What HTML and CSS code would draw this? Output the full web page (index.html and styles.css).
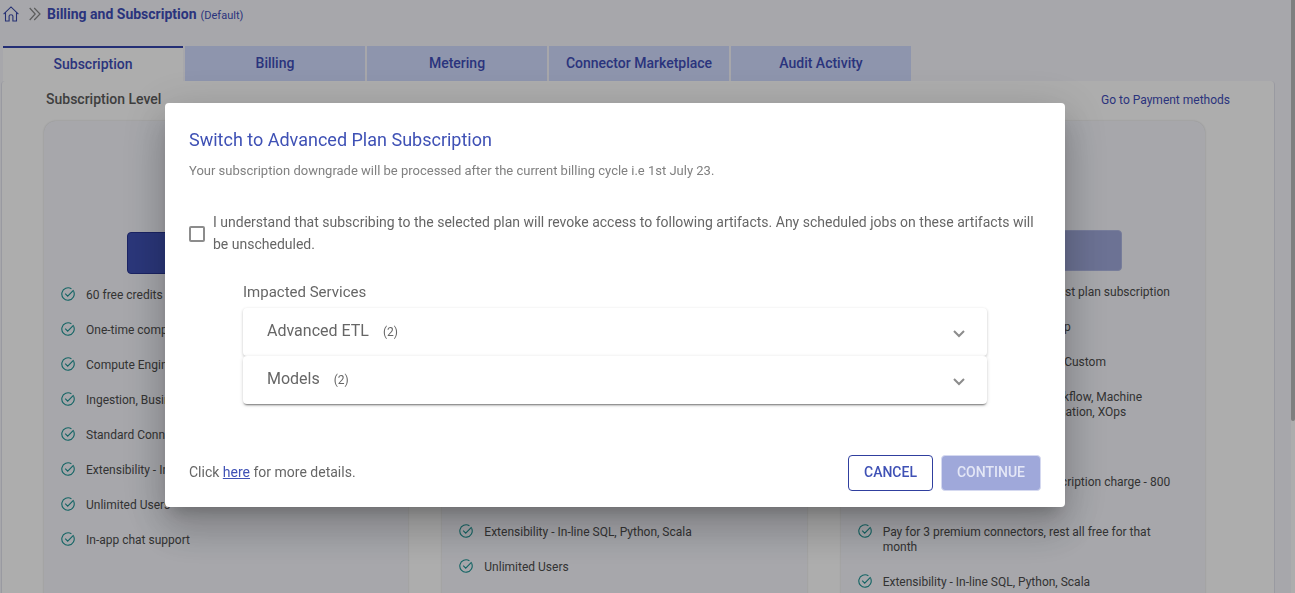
FILE: index.html
```html
<!DOCTYPE html>
<html lang="en">
<head>
<meta charset="utf-8">
<title>Billing and Subscription</title>
<link rel="stylesheet" href="styles.css">
</head>
<body>
<svg class="sprite" aria-hidden="true">
  <symbol id="check" viewBox="0 0 14 14">
    <path d="M12.6 4.3A6.2 6.2 0 1 1 10.4 1.8M4.2 6.6l2.5 2.5 5.9-6"/>
  </symbol>
  <symbol id="chevron" viewBox="0 0 12 12">
    <path d="M1 3l5 5 5-5"/>
  </symbol>
</svg>

<div class="page">
  <header class="crumbs">
    <a class="home" href="#" aria-label="Home">
      <svg width="16" height="16" viewBox="0 0 16 16"><path d="M.6 8.200L8 .9l7.400 7.300M2.500 6.800v8.200h3.600v-5q0-1.200 1.900-1.200t1.900 1.200v5h3.600V6.800"/></svg>
    </a>
    <svg class="arrows" width="12" height="14" viewBox="0 0 12 14"><path d="M.7 1l5.500 6-5.500 6M5.200 1l5.800 6-5.800 6"/></svg>
    <h1 class="crumb-title">Billing and Subscription</h1>
    <span class="crumb-note">(Default)</span>
  </header>

  <nav class="tabs">
    <button class="tab tab-active" type="button">Subscription</button>
    <button class="tab" type="button">Billing</button>
    <button class="tab" type="button">Metering</button>
    <button class="tab" type="button">Connector Marketplace</button>
    <button class="tab" type="button">Audit Activity</button>
  </nav>

  <main class="panel">
    <div class="panel-head">
      <h2 class="panel-title">Subscription Level</h2>
      <a class="payment" href="#">Go to Payment methods</a>
    </div>
    <div class="plans">
      <section class="plan plan-current">
        <button class="plan-button" type="button" aria-label="Select plan"></button>
        <ul class="features">
          <li><svg class="tick"><use href="#check"/></svg><span>60 free credits</span></li>
          <li><svg class="tick"><use href="#check"/></svg><span>One-time compute</span></li>
          <li><svg class="tick"><use href="#check"/></svg><span>Compute Engine</span></li>
          <li><svg class="tick"><use href="#check"/></svg><span>Ingestion, Business</span></li>
          <li><svg class="tick"><use href="#check"/></svg><span>Standard Connectors</span></li>
          <li><svg class="tick"><use href="#check"/></svg><span>Extensibility - In-line</span></li>
          <li><svg class="tick"><use href="#check"/></svg><span>Unlimited Users</span></li>
          <li><svg class="tick"><use href="#check"/></svg><span>In-app chat support</span></li>
        </ul>
      </section>
      <section class="plan">
        <button class="plan-button" type="button" aria-label="Select plan"></button>
        <ul class="features">
          <li><svg class="tick"><use href="#check"/></svg><span>First plan subscription</span></li>
          <li><svg class="tick"><use href="#check"/></svg><span>Monthly credits</span></li>
          <li><svg class="tick"><use href="#check"/></svg><span>Compute Engine</span></li>
          <li><svg class="tick"><use href="#check"/></svg><span>Ingestion, Business Intelligence,<br>Workflow</span></li>
          <li><svg class="tick"><use href="#check"/></svg><span>Standard Connectors</span></li>
          <li><svg class="tick"><use href="#check"/></svg><span>Premium connectors<br>for the month</span></li>
          <li><svg class="tick"><use href="#check"/></svg><span>Extensibility - In-line SQL, Python, Scala</span></li>
          <li><svg class="tick"><use href="#check"/></svg><span>Unlimited Users</span></li>
        </ul>
      </section>
      <section class="plan">
        <button class="plan-button" type="button" aria-label="Select plan"></button>
        <ul class="features">
          <li><svg class="tick"><use href="#check"/></svg><span>60 free credits for the month on first plan subscription</span></li>
          <li><svg class="tick"><use href="#check"/></svg><span>Pay as you go, buy credits to top up</span></li>
          <li><svg class="tick"><use href="#check"/></svg><span>Compute Engine - Small, Medium, Custom</span></li>
          <li><svg class="tick"><use href="#check"/></svg><span>Ingestion, ML, Advanced ETL, Workflow, Machine<br>Learning, Models, APIs and Automation, XOps</span></li>
          <li><svg class="tick"><use href="#check"/></svg><span>Standard Connectors</span></li>
          <li><svg class="tick"><use href="#check"/></svg><span>Minimum total monthly plan subscription charge - 800<br>credits</span></li>
          <li><svg class="tick"><use href="#check"/></svg><span>Pay for 3 premium connectors, rest all free for that month</span></li>
          <li><svg class="tick"><use href="#check"/></svg><span>Extensibility - In-line SQL, Python, Scala</span></li>
        </ul>
      </section>
    </div>
  </main>
  <div class="scroll-track"><div class="scroll-thumb"></div></div>
</div>

<div class="backdrop">
  <div class="dialog" role="dialog" aria-modal="true" aria-labelledby="dialog-title">
    <h2 class="dialog-title" id="dialog-title">Switch to Advanced Plan Subscription</h2>
    <p class="dialog-note">Your subscription downgrade will be processed after the current billing cycle i.e 1st July 23.</p>
    <div class="consent">
      <input class="box" type="checkbox" id="consent">
      <label for="consent">I understand that subscribing to the selected plan will revoke access to following artifacts. Any scheduled jobs on these artifacts will be unscheduled.</label>
    </div>
    <div class="services">
      <h3 class="services-title">Impacted Services</h3>
      <button class="service" type="button"><span class="service-name">Advanced ETL</span><span class="count">(2)</span><svg class="chevron"><use href="#chevron"/></svg></button>
      <button class="service" type="button"><span class="service-name">Models</span><span class="count">(2)</span><svg class="chevron"><use href="#chevron"/></svg></button>
    </div>
    <div class="dialog-foot">
      <p class="details">Click <a href="#">here</a> for more details.</p>
      <button class="btn" type="button">CANCEL</button>
      <button class="btn btn-primary" type="button" disabled>CONTINUE</button>
    </div>
  </div>
</div>
</body>
</html>
```
FILE: styles.css
```css
* { box-sizing: border-box; }

html, body { height: 100%; }

body {
  margin: 0;
  overflow: hidden;
  font-family: Roboto, "Liberation Sans", sans-serif;
  font-size: 14px;
  background: #f6f7fd;
}

h1, h2, h3, p, ul { margin: 0; padding: 0; }

button { font: inherit; cursor: pointer; }

svg { fill: none; flex: none; }

.sprite { position: absolute; width: 0; height: 0; }

.page {
  position: relative;
  height: 100%;
  overflow: hidden;
  padding: 0 20px 0 1px;
}

.crumbs {
  display: flex;
  align-items: center;
  height: 28px;
  padding-left: 2px;
  margin-bottom: 18px;
}

.home { display: flex; margin-right: 10px; }
.home svg { stroke: #3949ab; stroke-width: 1.1; }
.arrows { stroke: #888; stroke-width: 1.2; margin-right: 6px; }

.crumb-title { font-size: 14px; font-weight: 700; color: #3f4db8; }
.crumb-note { font-size: 11px; color: #3f4db8; margin-left: 4px; padding-top: 2px; }

.tabs { display: flex; gap: 2px; padding-left: 2px; }

.tab {
  width: 180px;
  height: 35px;
  padding: 0 0 2px;
  border: 0;
  background: #d1dcff;
  color: #3f4db8;
  font-weight: 500;
}

.tab-active {
  background: #fff;
  border-top: 2px solid #3444ad;
}

.panel {
  min-height: 100%;
  padding: 0 44px 0 42px;
  background: #fff;
  border: 1px solid #e2e3ee;
  border-top: 0;
  border-radius: 4px;
}

.panel-head {
  display: flex;
  justify-content: space-between;
  align-items: center;
  height: 36px;
  padding: 0 0 0 2px;
  margin-bottom: 4px;
}

.panel-title { font-size: 14px; font-weight: 500; color: #5c5c5c; }
.payment { font-size: 12px; color: #3f4db8; text-decoration: none; padding-top: 2px; }

.plans {
  display: grid;
  grid-template-columns: repeat(3, 1fr);
  gap: 34px;
  margin-right: 25px;
}

.plan {
  height: 600px;
  padding: 109px 28px 0 17px;
  background: #f6f7fd;
  border-radius: 12px;
  box-shadow: 0 0 2px rgba(0, 0, 0, .2);
}

.plan-current { padding-top: 111px; }

.plan-button {
  display: block;
  width: 198px;
  height: 41px;
  margin: 0 0 13px 66px;
  background: #9fa8da;
  border: 1px solid #b0b8e4;
  border-radius: 4px;
}

.plan-current .plan-button {
  height: 42px;
  background: #3f51b5;
  border-color: #283593;
}

.features {
  display: grid;
  gap: 20px;
  list-style: none;
  font-size: 12px;
  line-height: 15px;
  color: #4c4c4c;
}

.features li { display: flex; gap: 11px; }
.features span { padding-top: 1px; margin-bottom: -1px; }

.tick { width: 14px; height: 14px; stroke: #1e9494; stroke-width: 1.1; }

.scroll-track {
  position: absolute;
  top: 0;
  right: 0;
  bottom: 0;
  width: 4px;
  background: #fff;
}

.scroll-thumb { height: 71%; background: #bbb; border-radius: 0 0 4px 4px; }

.backdrop {
  position: fixed;
  inset: 0;
  display: flex;
  align-items: center;
  justify-content: center;
  padding: 17px 65px 0 0;
  background: rgba(0, 0, 0, .32);
}

.dialog {
  width: 900px;
  padding: 24px 24px 16px;
  background: #fff;
  border-radius: 4px;
  color: #666;
  box-shadow: 0 11px 15px -7px rgba(0, 0, 0, .2), 0 24px 38px 3px rgba(0, 0, 0, .14), 0 9px 46px 8px rgba(0, 0, 0, .12);
}

.dialog-title {
  font-size: 18px;
  font-weight: 400;
  line-height: 26px;
  color: #3f51b5;
}

.dialog-note {
  margin-top: 8px;
  font-size: 13px;
  line-height: 20px;
  color: #808080;
}

.consent {
  display: flex;
  align-items: center;
  gap: 8px;
  margin-top: 30px;
  line-height: 22px;
}

.box {
  appearance: none;
  flex: none;
  width: 16px;
  height: 16px;
  margin: 2px 0 0;
  border: 2px solid #8c8c8c;
  border-radius: 2px;
}

.services { margin: 28px 54px 0; }

.services-title {
  font-size: 15px;
  font-weight: 400;
  line-height: 18px;
  margin-bottom: 7px;
}

.service {
  display: flex;
  align-items: center;
  width: 100%;
  height: 48px;
  padding: 0 22px 4px 24px;
  border: 0;
  border-radius: 4px;
  background: #fff;
  color: #666;
  box-shadow: 0 1px 3px rgba(0, 0, 0, .24);
}

.service:last-child { box-shadow: 0 2px 2px -1px rgba(0, 0, 0, .5), 0 1px 4px rgba(0, 0, 0, .14); }

.service-name { font-size: 16px; }
.count { margin: 4px auto 0 14px; font-size: 12px; }
.chevron { width: 12px; height: 12px; margin-top: 8px; stroke: #8c8c8c; stroke-width: 2; }

.dialog-foot {
  display: flex;
  align-items: center;
  gap: 8px;
  margin-top: 51px;
}

.details { margin-right: auto; padding-bottom: 2px; line-height: 20px; }
.details a { color: #3f51b5; }

.btn {
  height: 36px;
  padding: 0 15px 2px;
  border: 1px solid #303f9f;
  border-radius: 4px;
  background: #fff;
  color: #3f51b5;
  font-weight: 500;
}

.btn-primary {
  border-color: #d5d9f0;
  background: #9fa8da;
  color: #e4e7f6;
}
```
